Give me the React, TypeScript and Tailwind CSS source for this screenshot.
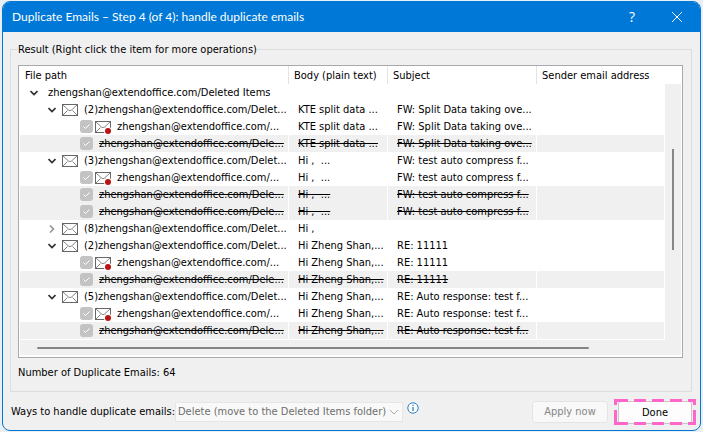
import React from "react";

type Kind = "root" | "group" | "closed" | "kept" | "dup";
type Row = { kind: Kind; path: string; body: string; subject: string };

const box = "zhengshan@extendoffice.com/";
const rows: Row[] = [
  { kind: "root", path: box + "Deleted Items", body: "", subject: "" },
  { kind: "group", path: "(2)" + box + "Delet...", body: "KTE split data ...", subject: "FW: Split Data taking ove..." },
  { kind: "kept", path: box + "...", body: "KTE split data ...", subject: "FW: Split Data taking ove..." },
  { kind: "dup", path: box + "Dele...", body: "KTE split data ...", subject: "FW: Split Data taking ove..." },
  { kind: "group", path: "(3)" + box + "Delet...", body: "Hi ,  ...", subject: "FW: test auto compress f..." },
  { kind: "kept", path: box + "...", body: "Hi ,  ...", subject: "FW: test auto compress f..." },
  { kind: "dup", path: box + "Dele...", body: "Hi ,  ...", subject: "FW: test auto compress f..." },
  { kind: "dup", path: box + "Dele...", body: "Hi ,  ...", subject: "FW: test auto compress f..." },
  { kind: "closed", path: "(8)" + box + "Delet...", body: "Hi ,", subject: "" },
  { kind: "group", path: "(2)" + box + "Delet...", body: "Hi Zheng Shan,...", subject: "RE: 11111" },
  { kind: "kept", path: box + "...", body: "Hi Zheng Shan,...", subject: "RE: 11111" },
  { kind: "dup", path: box + "Dele...", body: "Hi Zheng Shan,...", subject: "RE: 11111" },
  { kind: "group", path: "(5)" + box + "Delet...", body: "Hi Zheng Shan,...", subject: "RE: Auto response: test f..." },
  { kind: "kept", path: box + "...", body: "Hi Zheng Shan,...", subject: "RE: Auto response: test f..." },
  { kind: "dup", path: box + "Dele...", body: "Hi Zheng Shan,...", subject: "RE: Auto response: test f..." },
];

function Toggle({ open }: { open: boolean }) {
  return (
    <button type="button" aria-label={open ? "Collapse" : "Expand"} className="flex h-4 w-2 shrink-0 items-center justify-center">
      <svg width="8" height="8" viewBox="0 0 8 8" fill="none" className="shrink-0">
        {open ? (
          <path d="M.5 2 4 5.5 7.5 2" stroke="#333" strokeWidth="1.7" />
        ) : (
          <path d="M2 .5 5.5 4 2 7.5" stroke="#909090" strokeWidth="1.5" />
        )}
      </svg>
    </button>
  );
}

function Envelope({ dot = false }: { dot?: boolean }) {
  return (
    <svg width="16" height="14" viewBox="0 0 16 14" fill="none" className="shrink-0">
      <rect x=".5" y="1.5" width="15" height="11" fill="#fff" stroke="#666" />
      <path d="m1 2 5.5 5q1.5 1.2 3 0L15 2M1 12l4.5-4.5M15 12l-4.5-4.5" stroke="#777" strokeWidth=".9" />
      {dot && <circle cx="13" cy="11" r="4" fill="#fff" />}
      {dot && <circle cx="13" cy="11" r="3" fill="#b81414" />}
    </svg>
  );
}

function Check({ label }: { label: string }) {
  return (
    <span className="relative flex h-[13px] w-[13px] shrink-0">
      <input type="checkbox" aria-label={label} defaultChecked disabled className="h-[13px] w-[13px] appearance-none rounded-[3px] bg-[#c3c3c3]" />
      <svg width="13" height="13" viewBox="0 0 13 13" fill="none" className="pointer-events-none absolute inset-0">
        <path d="m3.5 6.5 2 2 4-4" stroke="#fff" />
      </svg>
    </span>
  );
}

function PathCell({ row }: { row: Row }) {
  if (row.kind === "root")
    return (
      <div className="flex items-center gap-[10px] pl-[10px]">
        <Toggle open />
        <span className="pt-px">{row.path}</span>
      </div>
    );
  if (row.kind === "group" || row.kind === "closed")
    return (
      <div className="flex items-center gap-1.5 pl-7">
        <Toggle open={row.kind === "group"} />
        <Envelope />
        <span className="pt-px">{row.path}</span>
      </div>
    );
  return (
    <div className="flex items-center pl-[60px]">
      <Check label={row.path} />
      {row.kind === "kept" ? (
        <span className="ml-0.5 flex items-center gap-1.5">
          <Envelope dot />
          <span className="pt-px">{row.path}</span>
        </span>
      ) : (
        <span className="ml-1.5 pt-px line-through">{row.path}</span>
      )}
    </div>
  );
}

export default function App() {
  return (
    <div className="bg-[#e9eef3] px-0.5 pb-px pt-px font-['DejaVu_Sans_Condensed','Noto_Sans',sans-serif] text-[11px] leading-4 text-black">
      <main className="overflow-hidden rounded-lg border border-[#0078d7] bg-[#f0f0f0]">
        <header className="flex h-[30px] items-center bg-[#0078d7] pl-[9px] pr-[17px] text-white">
          <h1 className="flex-1 font-['Lato',sans-serif] text-xs">Duplicate Emails – Step 4 (of 4): handle duplicate emails</h1>
          <button type="button" className="mr-9 font-['Open_Sans',sans-serif] text-sm">?</button>
          <button type="button" aria-label="Close">
            <svg width="12" height="12" viewBox="0 0 12 12" stroke="#fff" fill="none"><path d="m1 1 10 10M11 1 1 11" /></svg>
          </button>
        </header>

        <fieldset className="ml-[7px] mr-2 mt-2 border border-[#dcdcdc] pl-[7px] pr-2 pb-2">
          <legend className="pt-0.5">Result (Right click the item for more operations)</legend>
          <div className="mt-[7px] border border-[#a8a8ae] bg-white px-px pb-0.5">
            <div className="flex">
              <div className="min-w-0 flex-1">
                <table className="w-full table-fixed border-separate border-spacing-0 whitespace-pre text-left">
                  <colgroup>
                    <col className="w-[269px]" />
                    <col className="w-[99px]" />
                    <col className="w-[149px]" />
                    <col />
                  </colgroup>
                  <thead>
                    <tr className="h-[18px]">
                      <th className="border-r border-[#e3e3e3] p-0 pl-[5px] pt-0.5 font-normal">File path</th>
                      <th className="border-r border-[#e3e3e3] p-0 pl-[5px] pt-0.5 font-normal">Body (plain text)</th>
                      <th className="border-r border-[#e3e3e3] p-0 pl-[5px] pt-0.5 font-normal">Subject</th>
                      <th className="p-0 pl-[5px] pt-0.5 font-normal">Sender email address</th>
                    </tr>
                  </thead>
                  <tbody>
                    {rows.map((row, i) => (
                      <tr key={i} className={row.kind === "dup" ? "h-[17px] bg-[#f0f0f0]" : "h-[17px]"}>
                        <td className="border-r border-white p-0"><PathCell row={row} /></td>
                        <td className={row.kind === "dup" ? "border-r border-white p-0 pl-[9px] pt-px line-through" : "border-r border-white p-0 pl-[9px] pt-px"}>{row.body}</td>
                        <td className={row.kind === "dup" ? "border-r border-white p-0 pl-[9px] pt-px line-through" : "border-r border-white p-0 pl-[9px] pt-px"}>{row.subject}</td>
                        <td className="border-r border-white p-0" />
                      </tr>
                    ))}
                  </tbody>
                </table>
              </div>
              <div className="mt-[18px] flex w-4 justify-center bg-[#f0f0f0] pt-[65px]">
                <div className="h-[101px] w-0.5 bg-[#868686]" />
              </div>
            </div>
            <div className="bg-[#f0f0f0] pb-[6px] pl-[17px] pr-[92px]">
              <div className="-ml-[17px] -mr-[76px] h-px bg-white" />
              <div className="mt-[7px] h-0.5 rounded bg-[#868686]" />
            </div>
          </div>
          <p className="mt-[7px] pb-0.5">Number of Duplicate Emails: 64</p>
        </fieldset>

        <footer className="flex items-center pb-[5px] pl-2 pr-1 pt-[7px]">
          <label htmlFor="action">Ways to handle duplicate emails:</label>
          <div className="relative">
            <select id="action" disabled className="h-5 w-[228px] appearance-none border border-[#e6e6e6] bg-[#f9f9f9] pl-0.5 text-[#6d6d6d] opacity-100">
              <option>Delete (move to the Deleted Items folder)</option>
            </select>
            <svg width="10" height="6" viewBox="0 0 10 6" fill="none" stroke="#aaa" className="pointer-events-none absolute right-1 top-[7px]"><path d="m1 1 4 4 4-4" /></svg>
          </div>
          <button type="button" aria-label="Information" className="mb-2 ml-1">
            <svg width="12" height="12" viewBox="0 0 12 12" fill="none" stroke="#2b7fc4"><circle cx="6" cy="6" r="5.2" fill="#fff" /><path d="M6 5v4M6 2.7v1.3" strokeWidth="1.3" /></svg>
          </button>
          <button type="button" disabled className="ml-auto h-[22px] w-[76px] rounded-[3px] border border-[#e4e4e4] bg-[#f8f8f8] text-[#868686]">Apply now</button>
          <div className="relative ml-1.5 flex px-1 pb-px pt-0.5">
            <button type="button" className="h-[23px] w-[74px] rounded-[3px] border border-[#c8c8c8] bg-[#fdfdfd] pt-px">Done</button>
            <svg width="82" height="26" viewBox="0 0 82 26" fill="none" stroke="#ff66cc" strokeWidth="3" className="pointer-events-none absolute inset-0">
              <path d="M0 1.5H82M0 24.5H82" strokeDasharray="12 6" strokeDashoffset="-2" />
              <path d="M1.5 0V26M80.5 0V26" strokeDasharray="6 5 15 5" />
              <path d="M0 1.5H3M79 1.5H82" />
            </svg>
          </div>
        </footer>
      </main>
    </div>
  );
}
